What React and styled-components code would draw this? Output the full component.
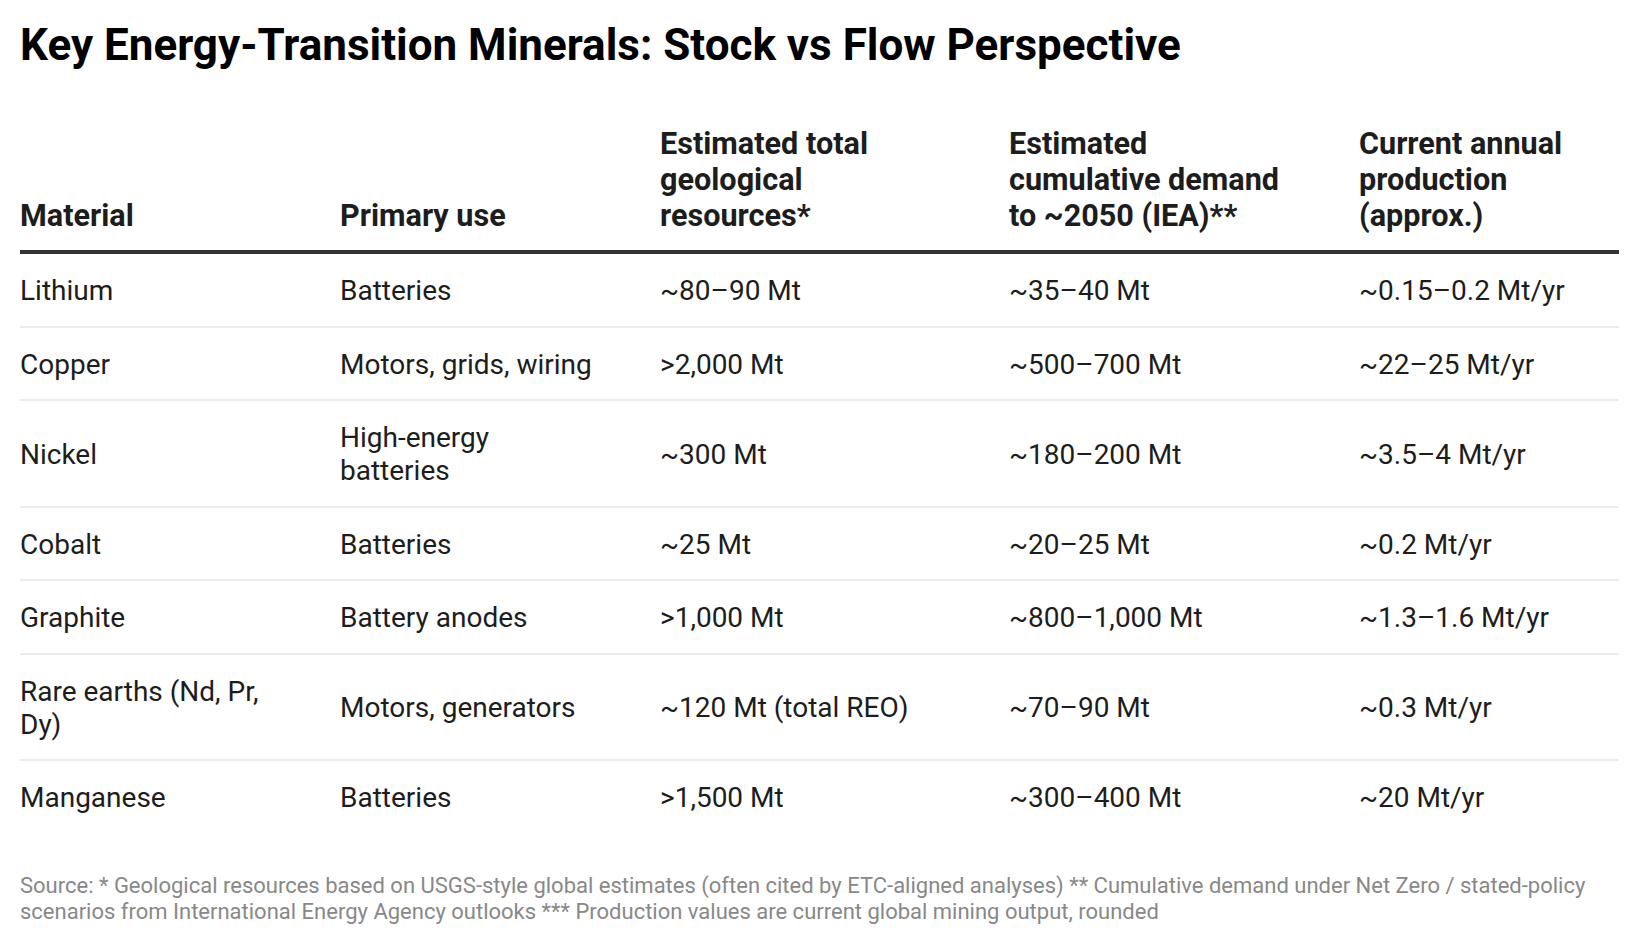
import React from "react";
import styled, { createGlobalStyle } from "styled-components";

const Global = createGlobalStyle`
  html, body { margin: 0; padding: 0; background: #ffffff; }
  body { font-family: Roboto, "Liberation Sans", Arial, sans-serif; color: #1d1d1d; }
`;

const Page = styled.div`
  padding: 20px 20px 0 20px;
  width: 1599px;
`;

const Title = styled.h1`
  margin: 0;
  font-size: 44px;
  line-height: 50px;
  font-weight: 700;
  color: #000;
`;

const Table = styled.div`
  margin-top: 56px;
  display: grid;
  grid-template-columns: 320px 320px 349px 350px 1fr;
`;

const HeadCell = styled.div`
  display: flex;
  align-items: flex-end;
  padding: 0 60px 16px 0;
  font-size: 30.6px;
  line-height: 36px;
  font-weight: 700;
  color: #1d1d1d;
  border-bottom: 4px solid #333333;
  &:nth-child(5n) { padding-right: 0; }
`;

const Cell = styled.div`
  display: flex;
  align-items: center;
  padding: 20px 60px 18.5px 0;
  font-size: 28px;
  line-height: 33px;
  color: #1d1d1d;
  border-bottom: ${(p) => (p.$last ? "none" : "2px solid #ececec")};
  &:nth-child(5n) { padding-right: 0; }
`;

const Notes = styled.p`
  margin: 40px 0 0 0;
  font-size: 22px;
  line-height: 1.2;
  color: #888888;
`;

const headers = [
  "Material",
  "Primary use",
  "Estimated total geological resources*",
  "Estimated cumulative demand to ~2050 (IEA)**",
  "Current annual production (approx.)",
];

const rows = [
  ["Lithium", "Batteries", "~80–90 Mt", "~35–40 Mt", "~0.15–0.2 Mt/yr"],
  ["Copper", "Motors, grids, wiring", ">2,000 Mt", "~500–700 Mt", "~22–25 Mt/yr"],
  ["Nickel", "High-energy batteries", "~300 Mt", "~180–200 Mt", "~3.5–4 Mt/yr"],
  ["Cobalt", "Batteries", "~25 Mt", "~20–25 Mt", "~0.2 Mt/yr"],
  ["Graphite", "Battery anodes", ">1,000 Mt", "~800–1,000 Mt", "~1.3–1.6 Mt/yr"],
  ["Rare earths (Nd, Pr, Dy)", "Motors, generators", "~120 Mt (total REO)", "~70–90 Mt", "~0.3 Mt/yr"],
  ["Manganese", "Batteries", ">1,500 Mt", "~300–400 Mt", "~20 Mt/yr"],
];

export default function App() {
  return (
    <>
      <Global />
      <Page>
        <Title>Key Energy-Transition Minerals: Stock vs Flow Perspective</Title>
        <Table>
          {headers.map((h) => (
            <HeadCell key={h}>{h}</HeadCell>
          ))}
          {rows.map((r, i) =>
            r.map((c, j) => (
              <Cell key={i + "-" + j} $last={i === rows.length - 1}>
                {c}
              </Cell>
            ))
          )}
        </Table>
        <Notes>
          Source: * Geological resources based on USGS-style global estimates (often cited by ETC-aligned analyses) ** Cumulative demand under Net Zero / stated-policy scenarios from International Energy Agency outlooks *** Production values are current global mining output, rounded
        </Notes>
      </Page>
    </>
  );
}
